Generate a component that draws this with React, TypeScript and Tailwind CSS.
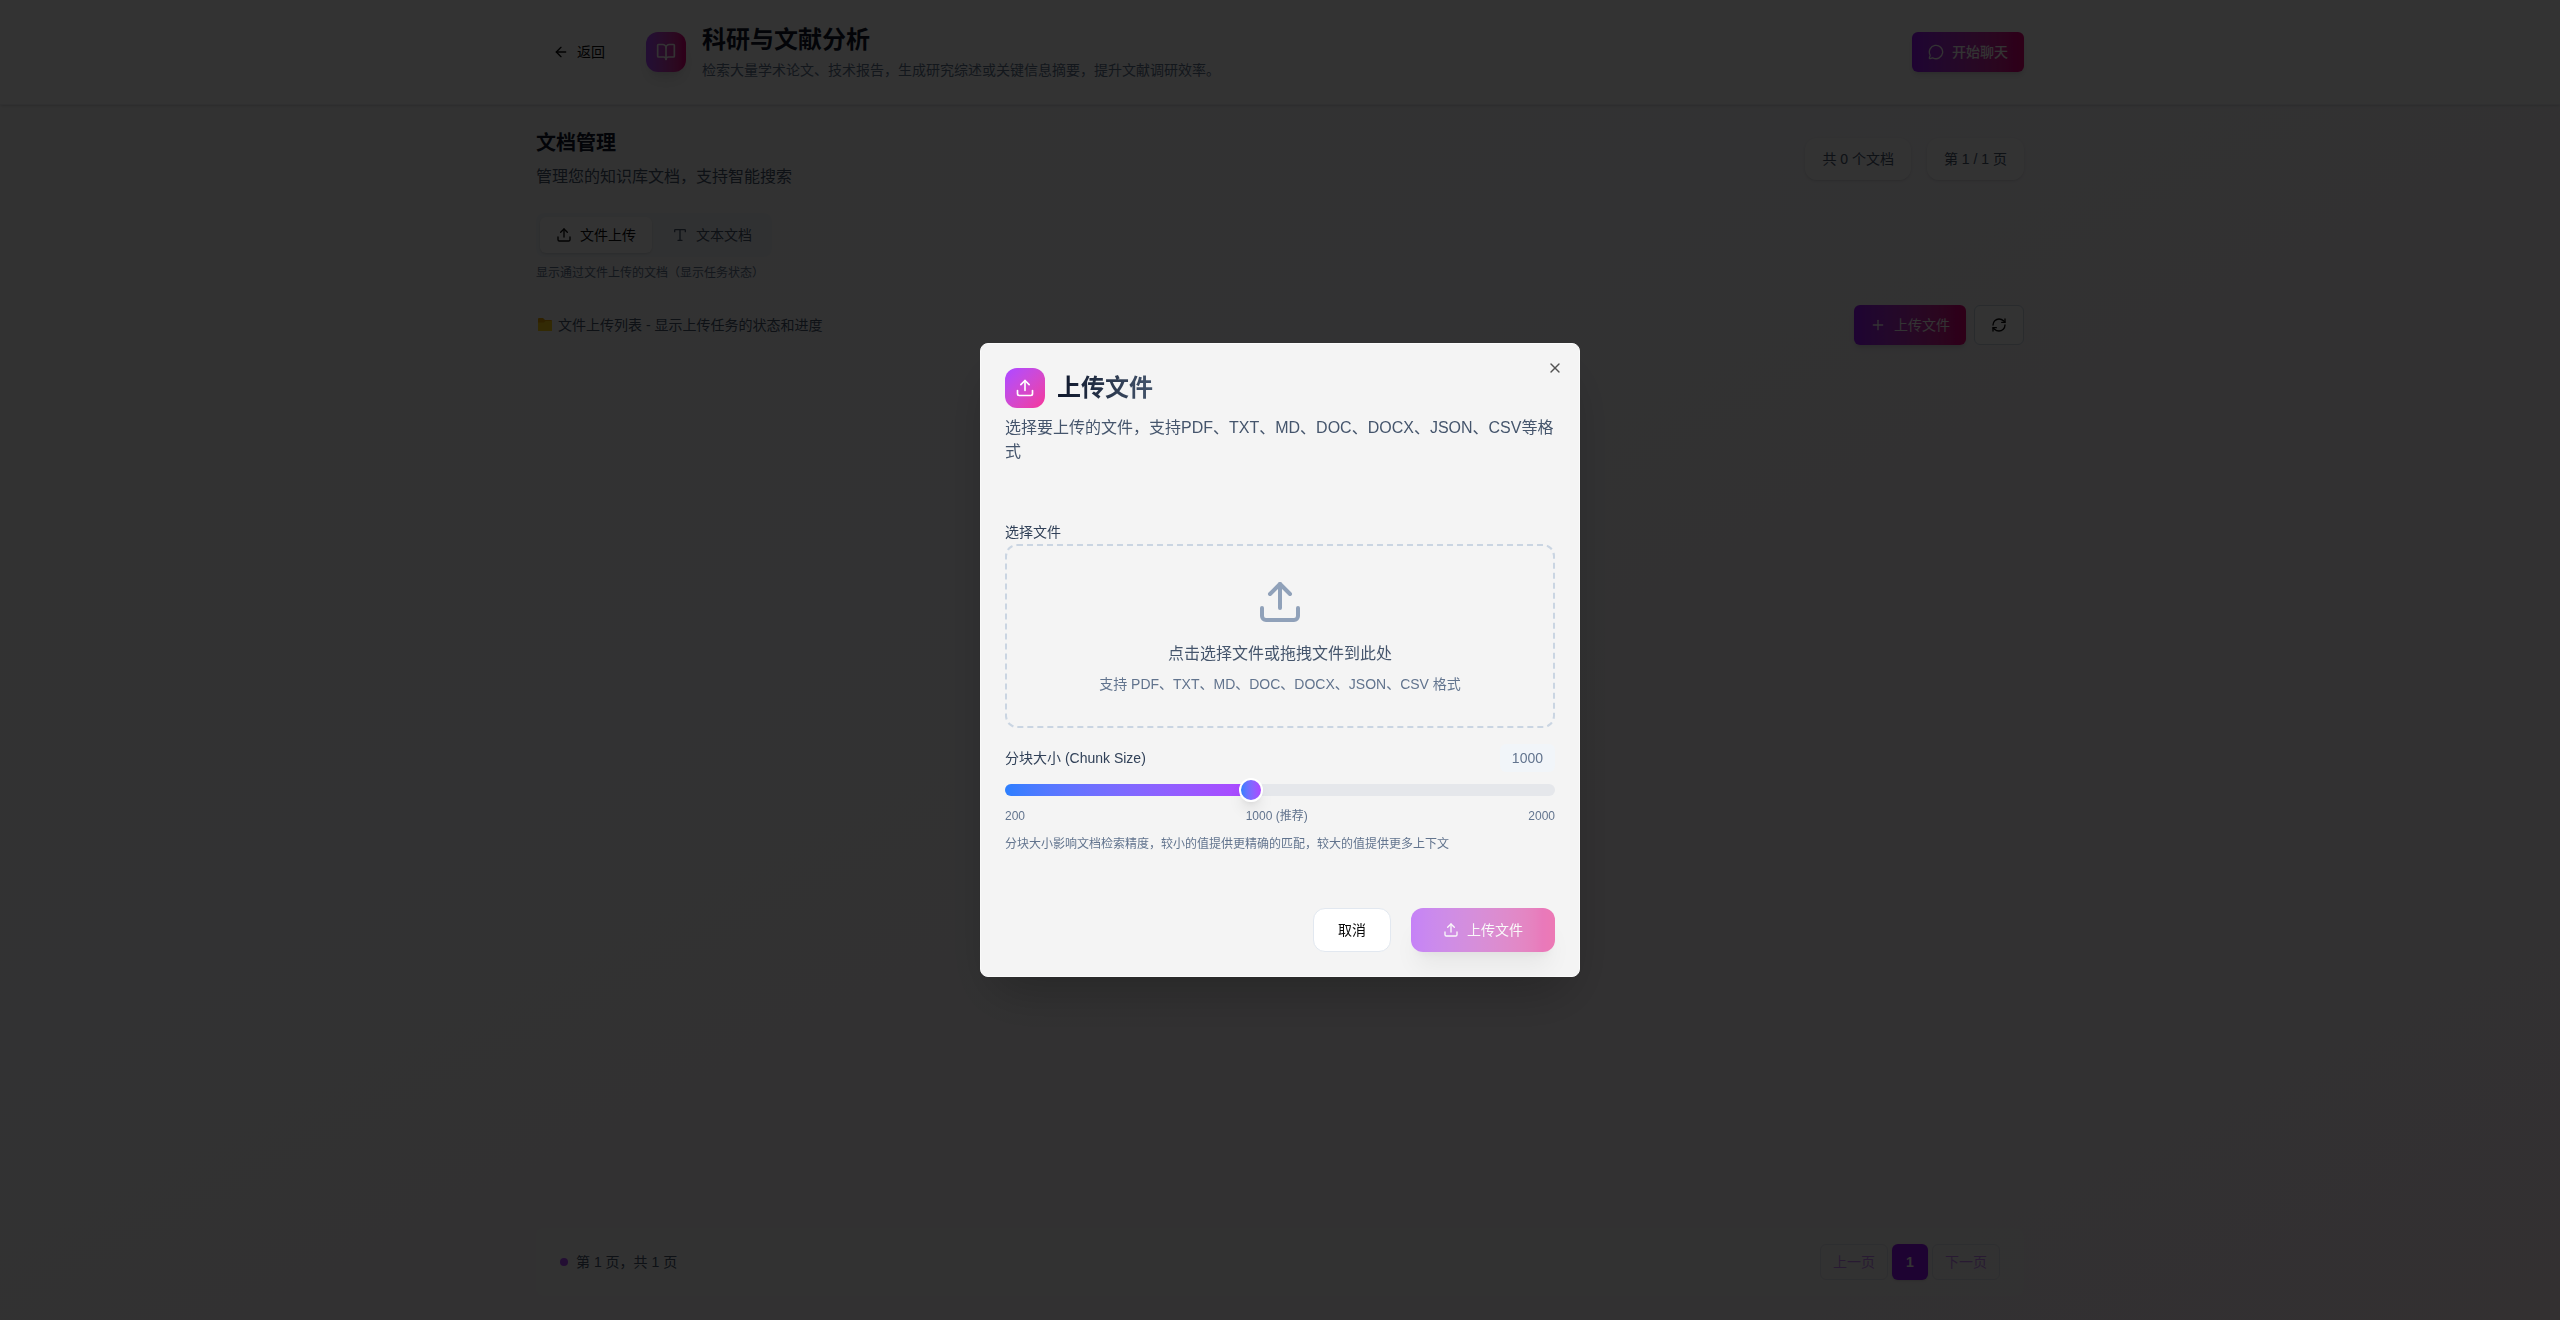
import { useState } from "react";
import { ArrowLeft, BookOpen, MessageCircle, Plus, RefreshCw, Type, Upload, X } from "lucide-react";

const MIN_CHUNK = 200;
const MAX_CHUNK = 2000;

export default function App() {
  return (
    <div className="min-h-screen font-['Liberation_Sans','Noto_Sans_CJK_SC',sans-serif] text-[#0a0a0a]">
      <KnowledgePage />
      <div className="fixed inset-0 z-50 flex items-center justify-center bg-black/80">
        <UploadDialog />
      </div>
    </div>
  );
}

function KnowledgePage() {
  return (
    <div className="flex min-h-screen flex-col bg-linear-to-br from-neutral-50 via-[#f8f8fc] via-40% to-[#fcf0f6]">
      <header className="border-b border-slate-200/60 bg-white/80 shadow-sm">
        <div className="mx-auto flex h-26 max-w-[1536px] items-center justify-between px-6">
          <div className="flex items-center gap-6">
            <button className="flex h-9 items-center gap-2 rounded-md border border-transparent px-4 text-sm">
              <ArrowLeft size={16} />
              返回
            </button>
            <div className="flex items-center gap-4">
              <span className="flex size-10 items-center justify-center rounded-xl bg-linear-to-r from-purple-500 to-pink-600 text-white shadow-lg">
                <BookOpen size={20} />
              </span>
              <div>
                <h1 className="text-2xl font-bold text-slate-900">科研与文献分析</h1>
                <p className="mt-1 text-sm text-slate-500">
                  检索大量学术论文、技术报告，生成研究综述或关键信息摘要，提升文献调研效率。
                </p>
              </div>
            </div>
          </div>
          <button className="flex h-10 items-center gap-2 rounded-md bg-linear-to-r from-purple-600 to-pink-600 px-4 text-sm font-medium text-white shadow-md">
            <MessageCircle size={16} />
            开始聊天
          </button>
        </div>
      </header>

      <main className="mx-auto flex w-full max-w-[1536px] grow flex-col p-6">
        <div className="flex items-center justify-between">
          <div>
            <h2 className="text-xl font-bold text-slate-900">文档管理</h2>
            <p className="mt-2 text-base text-slate-600">管理您的知识库文档，支持智能搜索</p>
          </div>
          <div className="flex gap-4 text-sm text-slate-600">
            <span className="rounded-xl border border-white/60 bg-white/60 px-4 py-2.5 shadow-sm">共 0 个文档</span>
            <span className="rounded-xl border border-white/60 bg-white/60 px-4 py-2.5 shadow-sm">第 1 / 1 页</span>
          </div>
        </div>

        <div className="mt-6 flex gap-1 self-start rounded-lg bg-slate-100 p-1 text-sm">
          <button className="flex h-9 items-center gap-2 rounded-md bg-white px-4 shadow-sm">
            <Upload size={16} />
            文件上传
          </button>
          <button className="flex h-9 items-center gap-2 rounded-md px-4 text-slate-600">
            <Type size={16} />
            文本文档
          </button>
        </div>
        <p className="mt-2 text-xs text-slate-500">显示通过文件上传的文档（显示任务状态）</p>

        <div className="mt-6 flex items-center justify-between">
          <p className="flex items-center gap-1 text-sm text-slate-600">
            <FolderIcon />
            文件上传列表 - 显示上传任务的状态和进度
          </p>
          <div className="flex gap-2">
            <button className="flex h-10 items-center gap-2 rounded-md bg-linear-to-r from-purple-600 to-pink-600 px-4 text-sm text-white shadow-md">
              <Plus size={16} />
              上传文件
            </button>
            <button aria-label="刷新" className="flex h-10 w-[50px] items-center justify-center rounded-md border border-slate-300 bg-white/80">
              <RefreshCw size={16} />
            </button>
          </div>
        </div>

        <Pagination />
      </main>
    </div>
  );
}

function FolderIcon() {
  return (
    <svg width="18" height="16" viewBox="0 0 18 16" aria-hidden>
      <path d="M2 2a1 1 0 0 1 1-1h4l2 2h6a1 1 0 0 1 1 1v4H2z" fill="#e8a500" />
      <path d="M2 5.500h6L9.500 4H16v9.500a.5.5 0 0 1-.5.5h-13a.5.5 0 0 1-.5-.5z" fill="#fcd116" />
    </svg>
  );
}

function Pagination() {
  return (
    <nav className="mt-auto flex items-center justify-between rounded-lg bg-neutral-50/60 px-6 py-4 text-sm">
      <p className="flex items-center gap-2 text-slate-600">
        <span className="size-2 rounded-full bg-purple-500" />
        第 1 页，共 1 页
      </p>
      <div className="flex items-center gap-1">
        <button disabled className="h-9 rounded-md border border-slate-300 px-3 text-purple-600 opacity-50">上一页</button>
        <button className="size-9 rounded-md bg-purple-600 font-bold text-white shadow-sm">1</button>
        <button disabled className="h-9 rounded-md border border-slate-300 px-3 text-purple-600 opacity-50">下一页</button>
      </div>
    </nav>
  );
}

function UploadDialog() {
  const [chunk, setChunk] = useState(1000);
  const percent = ((chunk - MIN_CHUNK) / (MAX_CHUNK - MIN_CHUNK)) * 100;

  return (
    <div
      role="dialog"
      aria-labelledby="upload-title"
      className="relative w-full max-w-[600px] rounded-lg border border-neutral-50 bg-[#f4f4f4] p-6 shadow-2xl"
    >
      <button aria-label="关闭" className="absolute top-4 right-4 text-neutral-600">
        <X size={16} />
      </button>

      <div className="flex items-center gap-3">
        <span className="flex size-10 items-center justify-center rounded-xl bg-linear-to-br from-purple-500 to-pink-500 text-white">
          <Upload size={20} />
        </span>
        <h2 id="upload-title" className="bg-linear-to-r from-slate-900 to-slate-600 bg-clip-text text-2xl font-bold text-transparent">
          上传文件
        </h2>
      </div>
      <p className="mt-2 text-base text-slate-600">
        选择要上传的文件，支持PDF、TXT、MD、DOC、DOCX、JSON、CSV等格式
      </p>

      <div className="mt-[58px]">
        <label htmlFor="upload-file" className="block text-sm text-slate-700">选择文件</label>
        <label className="mt-0.5 flex cursor-pointer flex-col items-center rounded-xl border-2 border-dashed border-slate-300 p-8 text-center">
          <input id="upload-file" type="file" className="sr-only" />
          <Upload size={48} className="text-slate-400" />
          <span className="mt-4 text-base text-slate-600">点击选择文件或拖拽文件到此处</span>
          <span className="mt-2 text-sm text-slate-500">支持 PDF、TXT、MD、DOC、DOCX、JSON、CSV 格式</span>
        </label>
      </div>

      <div className="mt-4">
        <div className="flex items-center justify-between text-sm">
          <label htmlFor="chunk-size" className="text-slate-700">分块大小 (Chunk Size)</label>
          <output htmlFor="chunk-size" className="rounded-md bg-slate-100 px-3 py-1 text-slate-500">{chunk}</output>
        </div>
        <div className="relative mt-3 flex h-3 items-center rounded-full bg-gray-200">
          <div className="h-3 rounded-full bg-linear-to-r from-blue-500 to-purple-500" style={{ width: `${percent}%` }} />
          <input
            id="chunk-size"
            type="range"
            min={MIN_CHUNK}
            max={MAX_CHUNK}
            step={100}
            value={chunk}
            onChange={(e) => setChunk(Number(e.target.value))}
            className="absolute inset-0 w-full cursor-pointer appearance-none bg-transparent [&::-webkit-slider-thumb]:size-6 [&::-webkit-slider-thumb]:appearance-none [&::-webkit-slider-thumb]:rounded-full [&::-webkit-slider-thumb]:border-2 [&::-webkit-slider-thumb]:border-white [&::-webkit-slider-thumb]:bg-linear-to-r [&::-webkit-slider-thumb]:from-blue-500 [&::-webkit-slider-thumb]:to-purple-500 [&::-webkit-slider-thumb]:shadow-lg"
          />
        </div>
        <div className="mt-3 flex justify-between text-xs text-slate-500">
          <span>200</span>
          <span>1000 (推荐)</span>
          <span>2000</span>
        </div>
        <p className="mt-3 text-xs text-slate-500">
          分块大小影响文档检索精度，较小的值提供更精确的匹配，较大的值提供更多上下文
        </p>
      </div>

      <div className="mt-14 flex justify-end gap-5 text-sm">
        <button className="h-11 rounded-xl border border-slate-200 bg-white px-6">取消</button>
        <button
          disabled
          className="flex h-11 items-center gap-2 rounded-xl bg-linear-to-r from-purple-600 to-pink-600 px-8 text-white opacity-50 shadow-xl"
        >
          <Upload size={16} />
          上传文件
        </button>
      </div>
    </div>
  );
}
